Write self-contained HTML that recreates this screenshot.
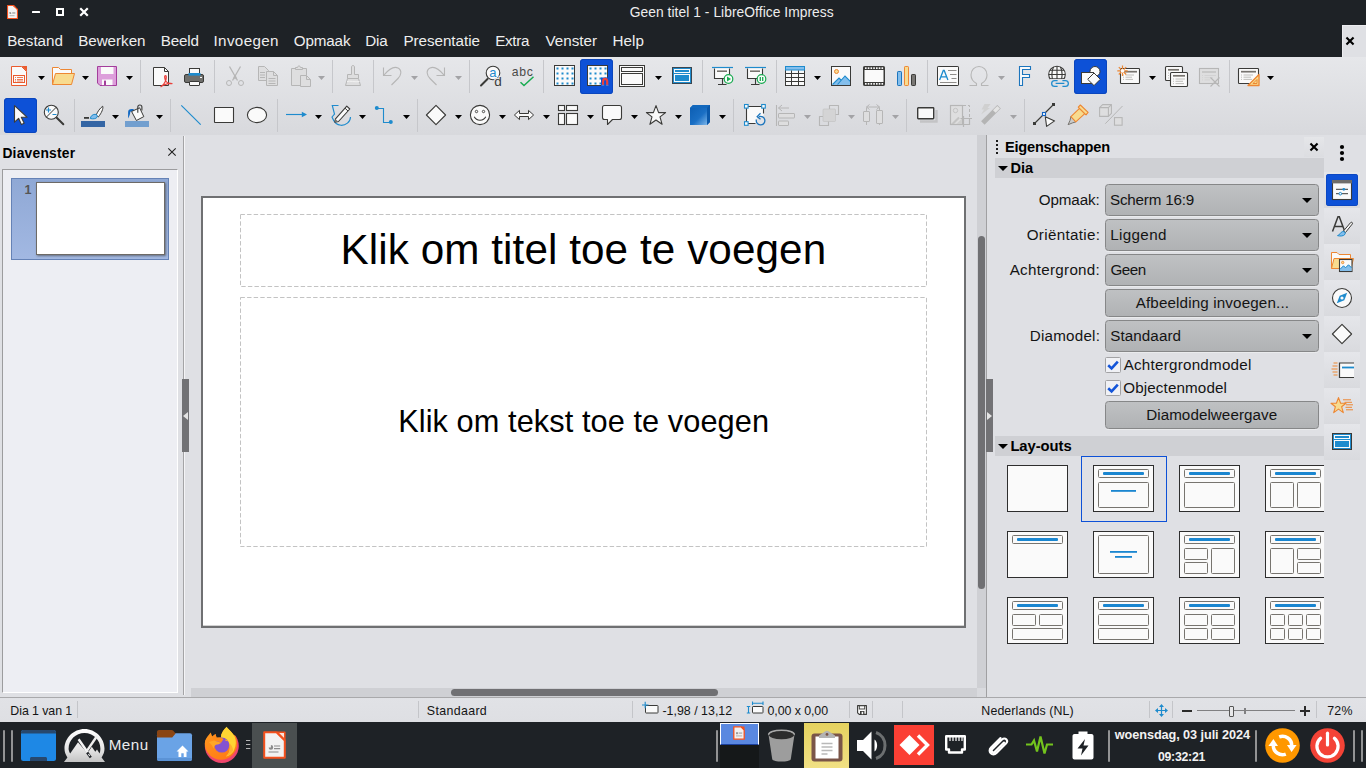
<!DOCTYPE html>
<html lang="nl"><head><meta charset="utf-8"><title>Geen titel 1 - LibreOffice Impress</title>
<style>
html,body{margin:0;padding:0;width:1366px;height:768px;overflow:hidden;background:#dfe0e4;}
body{position:relative;font-family:"Liberation Sans",sans-serif;color:#111;}
.a{position:absolute;}
.t{position:absolute;white-space:pre;line-height:1;}
svg{position:absolute;overflow:visible;}
.sep{position:absolute;width:1px;background:#c6c7cb;}
</style></head><body>
<!-- base -->
<div class="a" style="left:0px;top:0px;width:1366px;height:57px;background:#1e2226"></div>
<svg style="left:6.6px;top:5px;" width="11" height="14" viewBox="0 0 11 14"><path d="M0.55 0.55H6.6L10.45 4.4V13.45H0.55Z" fill="#f4f4f4" stroke="#f4511e" stroke-width="1.1" stroke-linejoin="round"/><path d="M6.6 0.7L10.3 4.4" stroke="#f4511e" stroke-width="1.3" stroke-dasharray="1.1 0.7"/><path d="M2.5 8.8V7C3.6 7 4.3 7.8 4.3 8.8Z" fill="#777"/><rect x="5.2" y="7.1" width="3.2" height="1.7" fill="#b4b4b4"/><rect x="2.5" y="10.2" width="5" height="1" fill="#b4b4b4"/></svg>
<div class="a" style="left:32px;top:11px;width:8px;height:2.2px;background:#fff;border-radius:0.5px"></div>
<div class="a" style="left:56px;top:8px;width:8px;height:8px;box-sizing:border-box;border:2px solid #fff"></div>
<svg style="left:80px;top:8px;" width="8" height="8" viewBox="0 0 8 8"><path d="M1 1L7 7M7 1L1 7" stroke="#fff" stroke-width="2.2" stroke-linecap="square"/></svg>
<span class="t" style="left:629.78px;top:6px;font-size:13.8px;color:#ededed;letter-spacing:0.053px;">Geen titel 1 - LibreOffice Impress</span>
<span class="t" style="left:7.18px;top:33px;font-size:15.2px;color:#eeeeee;letter-spacing:0.013px;">Bestand</span>
<span class="t" style="left:78.18px;top:33px;font-size:15.2px;color:#eeeeee;letter-spacing:-0.031px;">Bewerken</span>
<span class="t" style="left:160.68px;top:33px;font-size:15.2px;color:#eeeeee;letter-spacing:-0.142px;">Beeld</span>
<span class="t" style="left:213.55px;top:33px;font-size:15.2px;color:#eeeeee;letter-spacing:0.345px;">Invoegen</span>
<span class="t" style="left:293.75px;top:33px;font-size:15.2px;color:#eeeeee;letter-spacing:-0.124px;">Opmaak</span>
<span class="t" style="left:365.18px;top:33px;font-size:15.2px;color:#eeeeee;letter-spacing:-0.186px;">Dia</span>
<span class="t" style="left:403.43px;top:33px;font-size:15.2px;color:#eeeeee;letter-spacing:-0.029px;">Presentatie</span>
<span class="t" style="left:495.18px;top:33px;font-size:15.2px;color:#eeeeee;letter-spacing:-0.289px;">Extra</span>
<span class="t" style="left:545.4px;top:33px;font-size:15.2px;color:#eeeeee;letter-spacing:0.031px;">Venster</span>
<span class="t" style="left:612.43px;top:33px;font-size:15.2px;color:#eeeeee;letter-spacing:0.079px;">Help</span>
<div class="a" style="left:1342px;top:25px;width:24px;height:32px;background:#dfe0e4;box-shadow:inset 1px 1px 0 #ececef"></div>
<svg style="left:1346px;top:37px;" width="8" height="8" viewBox="0 0 8 8"><path d="M1.2 1.2L6.8 6.8M6.8 1.2L1.2 6.8" stroke="#000" stroke-width="2.1" stroke-linecap="square"/></svg>
<div class="a" style="left:0px;top:57px;width:1366px;height:78px;background:linear-gradient(#e6e7ea,#d8d9dd)"></div>
<span class="t" style="left:2.41px;top:147px;font-size:13.8px;color:#000;font-weight:bold;letter-spacing:0.235px;">Diavenster</span>
<svg style="left:168px;top:148px;" width="8" height="8" viewBox="0 0 8 8"><path d="M0.3 0.3L7.7 7.7M7.7 0.3L0.3 7.7" stroke="#222" stroke-width="1.1"/></svg>
<div class="a" style="left:2px;top:169px;width:176px;height:524px;box-sizing:border-box;background:#edeef3;border:1px solid #fff;border-top-color:#9c9c9e;border-left-color:#9c9c9e"></div>
<div class="a" style="left:11px;top:178px;width:158px;height:82px;box-sizing:border-box;background:linear-gradient(#8fa8d5,#a2b8e2);border:1px solid #6582b6"></div>
<div class="a" style="left:36px;top:182px;width:129px;height:73px;box-sizing:border-box;background:#fff;border:1px solid #6d6a66;box-shadow:1px 1px 2px rgba(60,60,60,.6)"></div>
<span class="t" style="left:24.45px;top:184px;font-size:12.6px;color:#555555;font-weight:bold;">1</span>
<div class="a" style="left:183px;top:136px;width:1px;height:559px;background:#a4a4a6"></div>
<div class="a" style="left:184px;top:136px;width:1px;height:559px;background:#f4f4f6"></div>
<div class="a" style="left:182px;top:379px;width:7px;height:73px;background:#727275"></div>
<svg style="left:183px;top:411.5px;" width="5" height="8" viewBox="0 0 5 8"><path d="M5 0V8L0 4Z" fill="#e4e4e4"/></svg>
<!-- toolbar -->
<div class="a" style="left:580px;top:59px;width:33px;height:35px;background:#0d51d7;border-radius:3.5px;box-shadow:inset 0 0 0 1px #0b46bd"></div>
<div class="a" style="left:1074px;top:59px;width:33px;height:35px;background:#0d51d7;border-radius:3.5px;box-shadow:inset 0 0 0 1px #0b46bd"></div>
<svg style="left:7px;top:64px;" width="24" height="24" viewBox="0 0 24 24"><path d="M4.5 2.5H14.5L19.5 7.5V21.5H4.5Z" fill="#fafafa" stroke="#ea5b2e" stroke-linejoin="round"/><path d="M14.5 2H20V7.5Z" fill="#ea5b2e"/><rect x="6.5" y="11.5" width="11" height="7" fill="#fafafa" stroke="#ea5b2e"/><path d="M8 13.5H9M10 13.5H16M8 15.5H9M10 15.5H16M8 17H9M10 17H16" stroke="#ea5b2e" stroke-width="0.8"/></svg>
<svg style="left:51px;top:64px;" width="24" height="24" viewBox="0 0 24 24"><path d="M1.5 20.5V3.5H7.5L9.5 5.5H20.5V9.5" fill="#fafafa" stroke="#ed8733" stroke-linejoin="round"/><path d="M1.5 20.5L4.5 9.5H23.5L20.5 20.5Z" fill="#f8db8f" stroke="#ed8733" stroke-linejoin="round"/></svg>
<svg style="left:95px;top:64px;" width="24" height="24" viewBox="0 0 24 24"><path d="M2.5 2.5H21.5V21.5H5L2.5 19Z" fill="#dd9edb" stroke="#a33e9b" stroke-linejoin="round"/><rect x="6" y="3" width="12.5" height="7" fill="#fafafa"/><rect x="7" y="15.5" width="10.5" height="5.6" fill="#fafafa"/><rect x="9" y="16.6" width="2" height="4.5" fill="#a33e9b"/></svg>
<svg style="left:149px;top:64px;" width="24" height="24" viewBox="0 0 24 24"><path d="M4.5 3.5H15.5L19.5 7.5V21.5H4.5Z" fill="#fafafa" stroke="#3a3a38" stroke-linejoin="round"/><path d="M15.5 3.5V7.5H19.5" fill="none" stroke="#3a3a38" stroke-linejoin="round"/><path d="M16.5 11.5C15.2 11.5 15.6 14.5 16.6 17C15.5 19.5 13.5 21.8 12 22.6C14.5 20.5 20 19 23 19.6C20.5 20 18 19 16.6 17C17.4 14.5 17.6 11.5 16.5 11.5Z" fill="none" stroke="#e9413c" stroke-width="1.25" stroke-linejoin="round"/></svg>
<svg style="left:182px;top:64px;" width="24" height="24" viewBox="0 0 24 24"><rect x="7.5" y="4.5" width="10" height="6" fill="#fafafa" stroke="#3a3a38"/><rect x="2.5" y="10.5" width="19" height="8" rx="1.5" fill="#6f6f6c" stroke="#3a3a38"/><rect x="6.5" y="9" width="12" height="2.6" fill="#1e8bcd"/><rect x="7.5" y="17.5" width="10" height="4" rx="0.5" fill="#fafafa" stroke="#3a3a38"/><rect x="18" y="13" width="2" height="1" fill="#fafafa"/></svg>
<svg style="left:223px;top:64px;" width="24" height="24" viewBox="0 0 24 24"><path d="M6.5 2.5L14.5 16.5M17.5 2.5L9.5 16.5" stroke="#b6b6b6" stroke-width="1.3" fill="none"/><path d="M10.3 13.2L12 11L13.7 13.2L12 15.5Z" fill="#b6b6b6"/><circle cx="6" cy="19" r="2.5" fill="none" stroke="#b6b6b6"/><circle cx="18" cy="19" r="2.5" fill="none" stroke="#b6b6b6"/></svg>
<svg style="left:256px;top:64px;" width="24" height="24" viewBox="0 0 24 24"><path d="M2.5 2.5H8.5L12.5 6.5V16.5H2.5Z" fill="#dededf" stroke="#b6b6b6"/><path d="M4 8.5H9M4 11H9M4 13.5H9" stroke="#b6b6b6"/><path d="M10.5 7.5H17.5L21.5 11.5V21.5H10.5Z" fill="#dededf" stroke="#b6b6b6"/><path d="M17.5 7.5V11.5H21.5" fill="none" stroke="#b6b6b6"/><path d="M12.5 14.5H19.5M12.5 17H19.5M12.5 19.5H19.5" stroke="#b6b6b6"/></svg>
<svg style="left:289px;top:64px;" width="24" height="24" viewBox="0 0 24 24"><path d="M2.5 4.5H17.5V21.5H2.5Z" fill="#dededf" stroke="#b6b6b6"/><path d="M6.5 5.5V3.5H8.5C8.5 1.5 11.5 1.5 11.5 3.5H13.5V5.5Z" fill="#dededf" stroke="#b6b6b6" stroke-linejoin="round"/><path d="M11.5 11.5H17.5L21.5 15.5V22.5H11.5Z" fill="#dededf" stroke="#b6b6b6"/><path d="M17.5 11.5V15.5H21.5" fill="none" stroke="#b6b6b6"/></svg>
<svg style="left:340.5px;top:64px;" width="24" height="24" viewBox="0 0 24 24"><path d="M10.5 3C10.5 1 13.5 1 13.5 3V10.5H17.5V14.5H6.5V10.5H10.5Z" fill="#dededf" stroke="#b6b6b6" stroke-linejoin="round"/><path d="M6.5 14.5L4.5 21.5H19.5L17.5 14.5Z" fill="#dededf" stroke="#b6b6b6" stroke-linejoin="round"/><path d="M6 17.5C9 16.5 14 18.5 18.5 17.5" fill="none" stroke="#f2f2f2" stroke-width="1"/></svg>
<svg style="left:380px;top:64px;" width="24" height="24" viewBox="0 0 24 24"><path d="M3.5 3.5V11.5H11.5" fill="none" stroke="#b6b6b6" stroke-width="1.1"/><path d="M3.7 11.3C9 5 14 2 18 4C22.5 6.5 21 11.5 18 14.5L11.5 21" fill="none" stroke="#b6b6b6" stroke-width="1.1"/></svg>
<svg style="left:424px;top:64px;" width="24" height="24" viewBox="0 0 24 24"><path d="M20.5 3.5V11.5H12.5" fill="none" stroke="#b6b6b6" stroke-width="1.1"/><path d="M20.3 11.3C15 5 10 2 6 4C1.5 6.5 3 11.5 6 14.5L12.5 21" fill="none" stroke="#b6b6b6" stroke-width="1.1"/></svg>
<svg style="left:479px;top:64px;" width="24" height="24" viewBox="0 0 24 24"><path d="M2 21.5L8.5 15" stroke="#3a3a38" stroke-width="2" stroke-linecap="round"/><circle cx="14" cy="9" r="6.8" fill="#fafafa" stroke="#3a3a38" stroke-width="1.1"/><text x="10.2" y="13" font-family="Liberation Sans,sans-serif" font-size="13" fill="#1e8bcd">a</text><text x="15.2" y="22" font-family="Liberation Sans,sans-serif" font-size="13.5" fill="#3a3a38" stroke="#e1e2e6" stroke-width="2.4" paint-order="stroke">d</text></svg>
<svg style="left:511px;top:64px;" width="24" height="24" viewBox="0 0 24 24"><text x="0.7" y="12" font-family="Liberation Sans,sans-serif" font-size="12.2" fill="#4a4a48" letter-spacing="0.75">abc</text><path d="M9.5 18.2L13 21.5L22.5 12.8" fill="none" stroke="#18ab50" stroke-width="1.5"/></svg>
<svg style="left:553px;top:64px;" width="24" height="24" viewBox="0 0 24 24"><rect x="1.5" y="1.5" width="20" height="20" fill="#fafafa" stroke="#3a3a38"/><rect x="3.5" y="3.5" width="2" height="2" fill="#1e8bcd"/><rect x="8.5" y="3.5" width="2" height="2" fill="#1e8bcd"/><rect x="13.5" y="3.5" width="2" height="2" fill="#1e8bcd"/><rect x="18.5" y="3.5" width="2" height="2" fill="#1e8bcd"/><rect x="3.5" y="8.5" width="2" height="2" fill="#1e8bcd"/><rect x="8.5" y="8.5" width="2" height="2" fill="#1e8bcd"/><rect x="13.5" y="8.5" width="2" height="2" fill="#1e8bcd"/><rect x="18.5" y="8.5" width="2" height="2" fill="#1e8bcd"/><rect x="3.5" y="13.5" width="2" height="2" fill="#1e8bcd"/><rect x="8.5" y="13.5" width="2" height="2" fill="#1e8bcd"/><rect x="13.5" y="13.5" width="2" height="2" fill="#1e8bcd"/><rect x="18.5" y="13.5" width="2" height="2" fill="#1e8bcd"/><rect x="3.5" y="18.5" width="2" height="2" fill="#1e8bcd"/><rect x="8.5" y="18.5" width="2" height="2" fill="#1e8bcd"/><rect x="13.5" y="18.5" width="2" height="2" fill="#1e8bcd"/><rect x="18.5" y="18.5" width="2" height="2" fill="#1e8bcd"/></svg>
<svg style="left:585px;top:64px;" width="24" height="24" viewBox="0 0 24 24"><rect x="2.5" y="1.5" width="20" height="20" fill="#fafafa" stroke="#3a3a38"/><rect x="4.5" y="3.5" width="2" height="2" fill="#1e8bcd"/><rect x="9.5" y="3.5" width="2" height="2" fill="#1e8bcd"/><rect x="14.5" y="3.5" width="2" height="2" fill="#1e8bcd"/><rect x="19.5" y="3.5" width="2" height="2" fill="#1e8bcd"/><rect x="4.5" y="8.5" width="2" height="2" fill="#1e8bcd"/><rect x="9.5" y="8.5" width="2" height="2" fill="#1e8bcd"/><rect x="14.5" y="8.5" width="2" height="2" fill="#1e8bcd"/><rect x="19.5" y="8.5" width="2" height="2" fill="#1e8bcd"/><rect x="4.5" y="13.5" width="2" height="2" fill="#1e8bcd"/><rect x="9.5" y="13.5" width="2" height="2" fill="#1e8bcd"/><rect x="14.5" y="13.5" width="2" height="2" fill="#1e8bcd"/><rect x="19.5" y="13.5" width="2" height="2" fill="#1e8bcd"/><rect x="4.5" y="18.5" width="2" height="2" fill="#1e8bcd"/><rect x="9.5" y="18.5" width="2" height="2" fill="#1e8bcd"/><rect x="14.5" y="18.5" width="2" height="2" fill="#1e8bcd"/><rect x="19.5" y="18.5" width="2" height="2" fill="#1e8bcd"/><rect x="16" y="13.5" width="8" height="9.5" fill="#0d51d7"/><path d="M18 22V17.5C18 13.9 22.2 13.9 22.2 17.5V22" fill="none" stroke="#e9413c" stroke-width="2.2"/><path d="M16.9 21.4H19.1M21.1 21.4H23.3" stroke="#3a7ddd" stroke-width="1.2"/></svg>
<svg style="left:620px;top:64px;" width="24" height="24" viewBox="0 0 24 24"><rect x="-0.5" y="1.5" width="25" height="21" fill="#fafafa" stroke="#3a3a38"/><rect x="1.5" y="3.5" width="21" height="4" fill="#fafafa" stroke="#3a3a38"/><rect x="1.5" y="9.5" width="21" height="11" fill="#fafafa" stroke="#3a3a38"/></svg>
<svg style="left:670px;top:64px;" width="24" height="24" viewBox="0 0 24 24"><rect x="2.5" y="3.5" width="19" height="16" fill="#1e8bcd" stroke="#3b4650" stroke-width="1"/><rect x="4.5" y="5.5" width="15" height="3" fill="#1e8bcd" stroke="#fafafa"/><rect x="4.5" y="10.5" width="15" height="7" fill="#1e8bcd" stroke="#fafafa"/></svg>
<svg style="left:711px;top:64px;" width="24" height="24" viewBox="0 0 24 24"><path d="M1 3.5H22" stroke="#1e8bcd" stroke-width="1.2"/><path d="M3.5 4.5V14.5H18.5V4.5" fill="#fafafa" stroke="#3a3a38" stroke-width="1.1"/><path d="M6 7.2H16" stroke="#77746f" stroke-width="1.6"/><path d="M11.5 14.5V20.5M7 20.5H15.5" stroke="#3a3a38" stroke-width="1.1" fill="none"/><circle cx="17.5" cy="15" r="4.3" fill="#fafafa" stroke="#18ab50" stroke-width="1.2"/><path d="M16 12.6V17.4L20 15Z" fill="#18ab50"/></svg>
<svg style="left:744px;top:64px;" width="24" height="24" viewBox="0 0 24 24"><path d="M1 3.5H22" stroke="#1e8bcd" stroke-width="1.2"/><path d="M3.5 4.5V14.5H18.5V4.5" fill="#fafafa" stroke="#3a3a38" stroke-width="1.1"/><path d="M6 7.2H16" stroke="#77746f" stroke-width="1.6"/><path d="M11.5 14.5V20.5M7 20.5H15.5" stroke="#3a3a38" stroke-width="1.1" fill="none"/><circle cx="17.5" cy="15" r="4.3" fill="#fafafa" stroke="#18ab50" stroke-width="1.2"/><path d="M16.3 13V17M18.7 13V17" stroke="#18ab50" stroke-width="1.3"/></svg>
<svg style="left:783px;top:64px;" width="24" height="24" viewBox="0 0 24 24"><rect x="2.5" y="2.5" width="19" height="19" fill="#fafafa" stroke="#3a3a38"/><rect x="2.5" y="2.5" width="19" height="3.5" fill="#83beec" stroke="#1e8bcd" stroke-width="1"/><path d="M2.5 9.5H21.5M2.5 13.5H21.5M2.5 17.5H21.5M8.5 6.5V21.5M15.5 6.5V21.5" stroke="#3a3a38" fill="none"/></svg>
<svg style="left:829px;top:64px;" width="24" height="24" viewBox="0 0 24 24"><rect x="2.5" y="2.5" width="19" height="19" fill="#fafafa" stroke="#3a3a38"/><circle cx="7.5" cy="7.5" r="2" fill="#f8db8f" stroke="#ed8733"/><path d="M3 21L10 14L12 16L16 12L21 17V21Z" fill="#83beec"/><path d="M3.5 20.5L10 14L12.5 16.5M8.5 20.5L16 12L21.3 17.3" fill="none" stroke="#1e8bcd" stroke-width="1.1"/><rect x="2.5" y="2.5" width="19" height="19" fill="none" stroke="#3a3a38"/></svg>
<svg style="left:862px;top:64px;" width="24" height="24" viewBox="0 0 24 24"><rect x="1.5" y="2.5" width="21" height="19" rx="0.8" fill="#3a3a38" stroke="#3a3a38"/><rect x="2.5" y="6" width="19" height="12" fill="#fafafa"/><rect x="3.00" y="3.3" width="1.6" height="1.7" fill="#fafafa"/><rect x="3.00" y="19" width="1.6" height="1.7" fill="#fafafa"/><rect x="5.75" y="3.3" width="1.6" height="1.7" fill="#fafafa"/><rect x="5.75" y="19" width="1.6" height="1.7" fill="#fafafa"/><rect x="8.50" y="3.3" width="1.6" height="1.7" fill="#fafafa"/><rect x="8.50" y="19" width="1.6" height="1.7" fill="#fafafa"/><rect x="11.25" y="3.3" width="1.6" height="1.7" fill="#fafafa"/><rect x="11.25" y="19" width="1.6" height="1.7" fill="#fafafa"/><rect x="14.00" y="3.3" width="1.6" height="1.7" fill="#fafafa"/><rect x="14.00" y="19" width="1.6" height="1.7" fill="#fafafa"/><rect x="16.75" y="3.3" width="1.6" height="1.7" fill="#fafafa"/><rect x="16.75" y="19" width="1.6" height="1.7" fill="#fafafa"/><rect x="19.50" y="3.3" width="1.6" height="1.7" fill="#fafafa"/><rect x="19.50" y="19" width="1.6" height="1.7" fill="#fafafa"/></svg>
<svg style="left:895px;top:64px;" width="24" height="24" viewBox="0 0 24 24"><rect x="2.5" y="7.5" width="4" height="14" rx="0.7" fill="#83beec" stroke="#1c75bd"/><rect x="9.5" y="2.5" width="4" height="19" rx="0.7" fill="#f8db8f" stroke="#ed8733"/><rect x="16.5" y="10.5" width="4" height="11" rx="0.7" fill="#797774" stroke="#3a3a38"/></svg>
<svg style="left:936px;top:64px;" width="24" height="24" viewBox="0 0 24 24"><rect x="1.5" y="2.5" width="21" height="19" rx="0.6" fill="#fafafa" stroke="#3a3a38"/><path d="M3.6 16L7.3 6.5H8.2L11.9 16M5 12.8H10.5" fill="none" stroke="#1e8bcd" stroke-width="1.3"/><path d="M12 6.5H20.5M14 10.5H20.5M15.5 14.5H20.5M4 18.5H20.5" stroke="#8f8d8a" stroke-width="1"/></svg>
<svg style="left:967px;top:64px;" width="24" height="24" viewBox="0 0 24 24"><path d="M2.5 21.5H9.5V19.5C6 17.5 4 14.5 4 11C4 6 7.5 2.5 12 2.5C16.5 2.5 20 6 20 11C20 14.5 18 17.5 14.5 19.5V21.5H21.5" fill="none" stroke="#b6b6b6" stroke-width="1.1"/></svg>
<svg style="left:1013px;top:64px;" width="24" height="24" viewBox="0 0 24 24"><path d="M6.5 2.5H17.5V5.5H9.5V10.5H16.5V13.5H9.5V21.5H6.5Z" fill="#fafafa" stroke="#1c75bd" stroke-width="1.1"/></svg>
<svg style="left:1046px;top:64px;" width="24" height="24" viewBox="0 0 24 24"><circle cx="11" cy="10.5" r="8.3" fill="#fafafa" stroke="#3a3a38" stroke-width="1.1"/><path d="M2.8 10.5H19.2M4 6.2H18M4 14.8H18M11 2.2V18.8M7.6 3C5.3 6.5 5.3 14.5 7.6 18M14.4 3C16.7 6.5 16.7 14.5 14.4 18" fill="none" stroke="#3a3a38" stroke-width="1.1"/><path d="M4 15H24V24H4Z" fill="#e0e1e5"/><path d="M11.6 16.5H8.6A2.95 2.95 0 0 0 8.6 22.4H11.6M16.4 16.5H19.4A2.95 2.95 0 0 1 19.4 22.4H16.4M9.6 19.45H18.4" fill="none" stroke="#1e8bcd" stroke-width="1.25"/></svg>
<svg style="left:1079px;top:64px;" width="24" height="24" viewBox="0 0 24 24"><circle cx="16" cy="7.5" r="5" fill="#fafafa" stroke="#3a3a38"/><rect x="2.5" y="8.5" width="12" height="11" fill="#fafafa" stroke="#3a3a38"/><path d="M15 9L21.3 15.3L15 21.6L8.7 15.3Z" fill="#fafafa" stroke="#3a3a38" stroke-linejoin="round"/></svg>
<svg style="left:1117px;top:64px;" width="24" height="24" viewBox="0 0 24 24"><rect x="3.5" y="4.5" width="19" height="15" rx="0.7" fill="#fafafa" stroke="#3a3a38" stroke-width="1.1"/><path d="M6 7.7H20" stroke="#77746f" stroke-width="1.7"/><path d="M6 11H7M8.5 11H17M6 13.2H7M8.5 13.2H15M6 15.4H7M8.5 15.4H16" stroke="#b0aeab" stroke-width="0.8"/><g stroke="#ed8733" stroke-width="1.2"><path d="M5.5 1.5V12M0.3 6.8H10.7M1.8 3.1L9.2 10.5M9.2 3.1L1.8 10.5"/></g><circle cx="5.5" cy="6.8" r="1.9" fill="#fafafa"/></svg>
<svg style="left:1164px;top:64px;" width="24" height="24" viewBox="0 0 24 24"><rect x="1.5" y="2.5" width="17" height="14" rx="1" fill="#fafafa" stroke="#3a3a38" stroke-width="1.1"/><path d="M4 5.8H15" stroke="#77746f" stroke-width="1.7"/><path d="M4 9H5M4 11.5H5M4 14H5" stroke="#b0aeab" stroke-width="0.8"/><rect x="6.5" y="8.5" width="17" height="14" rx="1" fill="#fafafa" stroke="#3a3a38" stroke-width="1.1"/><path d="M9 11.8H21" stroke="#77746f" stroke-width="1.7"/><path d="M9 15H10M11.5 15H21M9 17.3H10M11.5 17.3H19M9 19.6H10M11.5 19.6H20" stroke="#b0aeab" stroke-width="0.8"/></svg>
<svg style="left:1197px;top:64px;" width="24" height="24" viewBox="0 0 24 24"><rect x="2.5" y="4.5" width="19" height="15" fill="#dededf" stroke="#b6b6b6" stroke-width="1.1"/><path d="M5 8H19" stroke="#c4c4c4" stroke-width="1.7"/><path d="M5 11.5H6M7.5 11.5H19M5 13.7H6M7.5 13.7H16M5 15.9H6M7.5 15.9H13" stroke="#cfcfcf" stroke-width="0.8"/><path d="M13.5 13.5L22.5 22.5M22.5 13.5L13.5 22.5" stroke="#b6b6b6" stroke-width="1.1"/></svg>
<svg style="left:1237px;top:64px;" width="24" height="24" viewBox="0 0 24 24"><rect x="1.5" y="4.5" width="20" height="15" rx="0.7" fill="#fafafa" stroke="#3a3a38" stroke-width="1.1"/><path d="M4 7.7H19" stroke="#77746f" stroke-width="1.7"/><path d="M4 11H5M6.5 11H16M4 13.2H5M6.5 13.2H14M4 15.4H5M6.5 15.4H15" stroke="#b0aeab" stroke-width="0.8"/><path d="M22 10.5V21.5H11Z" fill="#f8db8f" stroke="#ed8733" stroke-width="1.3" stroke-linejoin="round"/><path d="M20 15.5V19.5H16Z" fill="#f8db8f" stroke="#ed8733" stroke-width="1"/></svg>
<svg style="left:38.0px;top:76px;" width="7" height="4" viewBox="0 0 7 4"><path d="M0 0H7L3.5 4Z" fill="#000"/></svg>
<svg style="left:82.0px;top:76px;" width="7" height="4" viewBox="0 0 7 4"><path d="M0 0H7L3.5 4Z" fill="#000"/></svg>
<svg style="left:126.0px;top:76px;" width="7" height="4" viewBox="0 0 7 4"><path d="M0 0H7L3.5 4Z" fill="#000"/></svg>
<svg style="left:655.0px;top:76px;" width="7" height="4" viewBox="0 0 7 4"><path d="M0 0H7L3.5 4Z" fill="#000"/></svg>
<svg style="left:814.0px;top:76px;" width="7" height="4" viewBox="0 0 7 4"><path d="M0 0H7L3.5 4Z" fill="#000"/></svg>
<svg style="left:1149.0px;top:76px;" width="7" height="4" viewBox="0 0 7 4"><path d="M0 0H7L3.5 4Z" fill="#000"/></svg>
<svg style="left:1267.0px;top:76px;" width="7" height="4" viewBox="0 0 7 4"><path d="M0 0H7L3.5 4Z" fill="#000"/></svg>
<svg style="left:318.0px;top:76px;" width="7" height="4" viewBox="0 0 7 4"><path d="M0 0H7L3.5 4Z" fill="#a3a3a6"/></svg>
<svg style="left:411.0px;top:76px;" width="7" height="4" viewBox="0 0 7 4"><path d="M0 0H7L3.5 4Z" fill="#a3a3a6"/></svg>
<svg style="left:455.0px;top:76px;" width="7" height="4" viewBox="0 0 7 4"><path d="M0 0H7L3.5 4Z" fill="#a3a3a6"/></svg>
<svg style="left:998.0px;top:76px;" width="7" height="4" viewBox="0 0 7 4"><path d="M0 0H7L3.5 4Z" fill="#a3a3a6"/></svg>
<div class="sep" style="left:140px;top:60px;height:33px;background:#c6c7cb"></div>
<div class="sep" style="left:214px;top:60px;height:33px;background:#c6c7cb"></div>
<div class="sep" style="left:332px;top:60px;height:33px;background:#c6c7cb"></div>
<div class="sep" style="left:373px;top:60px;height:33px;background:#c6c7cb"></div>
<div class="sep" style="left:469px;top:60px;height:33px;background:#c6c7cb"></div>
<div class="sep" style="left:543px;top:60px;height:33px;background:#c6c7cb"></div>
<div class="sep" style="left:702px;top:60px;height:33px;background:#c6c7cb"></div>
<div class="sep" style="left:776px;top:60px;height:33px;background:#c6c7cb"></div>
<div class="sep" style="left:927px;top:60px;height:33px;background:#c6c7cb"></div>
<div class="sep" style="left:1229px;top:60px;height:33px;background:#c6c7cb"></div>
<div class="a" style="left:4px;top:98px;width:33px;height:35px;background:#0d51d7;border-radius:3.5px;box-shadow:inset 0 0 0 1px #0b46bd"></div>
<svg style="left:8.5px;top:103px;" width="24" height="24" viewBox="0 0 24 24"><path d="M5.5 2.6V19.2L9.6 15.3L12.4 21.6L15.2 20.3L12.3 14.2H18Z" fill="#fafafa" stroke="#3a3a38" stroke-width="1.1" stroke-linejoin="round"/></svg>
<svg style="left:42px;top:103px;" width="24" height="24" viewBox="0 0 24 24"><path d="M14.5 14.5L21.3 21.3" stroke="#3a3a38" stroke-width="2" stroke-linecap="round"/><circle cx="9.3" cy="9.2" r="7" fill="#fafafa" stroke="#3a3a38" stroke-width="1.1"/><path d="M4.3 14.2L14.3 4.2" stroke="#3a3a38" stroke-width="1"/><path d="M4 7H9M6.5 4.5V9.5M10.5 11.5H14.5" stroke="#1e8bcd" stroke-width="1.2"/></svg>
<svg style="left:81px;top:103px;" width="24" height="24" viewBox="0 0 24 24"><rect x="0" y="18" width="24" height="6" fill="#3465a4"/><rect x="3" y="14" width="5" height="1.8" fill="#3a3a38"/><path d="M15.1 12.3C16.4 8.8 18.8 5.4 21.7 3.2C22.5 5.6 20.6 9.8 17.4 13.9Z" fill="#fafafa" stroke="#3a3a38" stroke-width="1" stroke-linejoin="round"/><path d="M9.3 15.5C9.6 13.4 11.2 11.4 14 11.3C16 11.3 16.8 13 16 14.3C15 15.8 12 16.2 9.3 15.5Z" fill="#83beec" stroke="#1e8bcd" stroke-linejoin="round"/></svg>
<svg style="left:125px;top:103px;" width="24" height="24" viewBox="0 0 24 24"><rect x="0" y="18" width="24" height="6" fill="#729fcf"/><path d="M8.8 6.2C5.2 5.4 3.1 6.4 3.1 9.2V15.6C4.5 13.2 5.2 11 5.3 8.8C6.4 8.1 7.6 8.1 8.8 8.4Z" fill="#1268c3"/><path d="M6.6 8.5L14.6 4.8L18.8 13.6L11.4 17.5Z" fill="#fafafa" stroke="#3a3a38" stroke-linejoin="round"/><path d="M12.8 9.8V4C12.8 1.4 16.9 1.4 16.9 4V7.4" fill="none" stroke="#3a3a38" stroke-width="1.1"/></svg>
<svg style="left:179px;top:103px;" width="24" height="24" viewBox="0 0 24 24"><path d="M2.3 2.3L21.7 21.7" stroke="#1e8bcd" stroke-width="1.15"/></svg>
<svg style="left:212px;top:103px;" width="24" height="24" viewBox="0 0 24 24"><rect x="2.5" y="4.5" width="19" height="15" rx="0.5" fill="#fafafa" stroke="#3a3a38" stroke-width="1.1"/></svg>
<svg style="left:245px;top:103px;" width="24" height="24" viewBox="0 0 24 24"><ellipse cx="12" cy="12" rx="9.6" ry="7.6" fill="#fafafa" stroke="#3a3a38" stroke-width="1.1"/></svg>
<svg style="left:285px;top:103px;" width="24" height="24" viewBox="0 0 24 24"><path d="M1 11.5H18" stroke="#1e8bcd" stroke-width="1.15"/><path d="M16.8 8.8L22 11.5L16.8 14.2Z" fill="#1e8bcd"/></svg>
<svg style="left:329px;top:103px;" width="24" height="24" viewBox="0 0 24 24"><path d="M9.5 2.5H3.3L5.5 11L3 14C4.5 18 7 22 12 22.3C16.5 22.5 21.5 19 21.5 14" fill="none" stroke="#1e8bcd" stroke-width="1.15"/><path d="M6.5 15.8L17.8 3.2L20.8 6L9.5 18.5L5.8 19.2Z" fill="#fafafa" stroke="#3a3a38" stroke-width="1.1" stroke-linejoin="round"/><path d="M16 5.2L19 8" stroke="#3a3a38" stroke-width="1"/><path d="M6.3 16L9.3 18.6L5.8 19.3Z" fill="#77746f"/></svg>
<svg style="left:373px;top:103px;" width="24" height="24" viewBox="0 0 24 24"><path d="M3.8 5.5H10.5V19.5H17.5" fill="none" stroke="#1e8bcd" stroke-width="1.1"/><circle cx="3.8" cy="5" r="2" fill="#1e8bcd"/><circle cx="17.8" cy="19" r="2" fill="#1e8bcd"/></svg>
<svg style="left:424px;top:103px;" width="24" height="24" viewBox="0 0 24 24"><path d="M12 2.4L21.6 12L12 21.6L2.4 12Z" fill="#fafafa" stroke="#3a3a38" stroke-width="1.1" stroke-linejoin="round"/></svg>
<svg style="left:468px;top:103px;" width="24" height="24" viewBox="0 0 24 24"><circle cx="12" cy="12" r="9.6" fill="#fafafa" stroke="#3a3a38" stroke-width="1.1"/><circle cx="8.5" cy="8.5" r="1.2" fill="#fafafa" stroke="#3a3a38" stroke-width="0.9"/><circle cx="15.5" cy="8.5" r="1.2" fill="#fafafa" stroke="#3a3a38" stroke-width="0.9"/><path d="M6.2 13.8C8.5 18.3 15.5 18.3 17.8 13.8" fill="none" stroke="#3a3a38" stroke-width="1.1"/></svg>
<svg style="left:512px;top:103px;" width="24" height="24" viewBox="0 0 24 24"><path d="M2.4 12L7.5 7.4V10.5H16.5V7.4L21.6 12L16.5 16.6V13.5H7.5V16.6Z" fill="#fafafa" stroke="#3a3a38" stroke-width="1" stroke-linejoin="round"/></svg>
<svg style="left:556px;top:103px;" width="24" height="24" viewBox="0 0 24 24"><rect x="2.5" y="2.5" width="6" height="5" fill="#fafafa" stroke="#3a3a38" stroke-width="1.1"/><rect x="10.5" y="2.5" width="11" height="5" fill="#fafafa" stroke="#3a3a38" stroke-width="1.1"/><rect x="2.5" y="10.5" width="6" height="11" fill="#fafafa" stroke="#3a3a38" stroke-width="1.1"/><rect x="10.5" y="10.5" width="11" height="11" fill="#fafafa" stroke="#3a3a38" stroke-width="1.1"/></svg>
<svg style="left:600px;top:103px;" width="24" height="24" viewBox="0 0 24 24"><path d="M4.5 2.5H19.5C20.6 2.5 21.5 3.4 21.5 4.5V14.5C21.5 15.6 20.6 16.5 19.5 16.5H12.5L7.5 21.5V16.5H4.5C3.4 16.5 2.5 15.6 2.5 14.5V4.5C2.5 3.4 3.4 2.5 4.5 2.5Z" fill="#fafafa" stroke="#3a3a38" stroke-width="1.1" stroke-linejoin="round"/></svg>
<svg style="left:644px;top:103px;" width="24" height="24" viewBox="0 0 24 24"><path d="M12 2.6L14.6 9.6H21.6L16 13.9L18.1 21.3L12 17L5.9 21.3L8 13.9L2.4 9.6H9.4Z" fill="#fafafa" stroke="#3a3a38" stroke-width="1.1" stroke-linejoin="round"/></svg>
<svg style="left:688px;top:103px;" width="24" height="24" viewBox="0 0 24 24"><defs><linearGradient id="cg" x1="0" y1="0" x2="1" y2="1"><stop offset="0" stop-color="#0d5fb4"/><stop offset="0.55" stop-color="#1a6fc4"/><stop offset="1" stop-color="#7db6ea"/></linearGradient></defs><path d="M5 2H22V19L19 22H2V5Z" fill="#0e60b5"/><rect x="2" y="5" width="17" height="17" fill="url(#cg)"/><path d="M2 5L5 2H22L19 5Z" fill="#1268bd"/><path d="M19 5L22 2V19L19 22Z" fill="#0a58aa"/></svg>
<svg style="left:743px;top:103px;" width="24" height="24" viewBox="0 0 24 24"><path d="M3.5 3.5H20.5V12M3.5 3.5V20.5H12" fill="#fafafa" stroke="none"/><rect x="3.5" y="3.5" width="17" height="17" fill="#fafafa"/><path d="M20.5 3.5V10.5M3.5 3.5H20.5M3.5 3.5V20.5H12.5" fill="none" stroke="#3a3a38" stroke-width="1.1"/><circle cx="17.5" cy="17.5" r="4.3" fill="#e1e2e6" stroke="none"/><path d="M16 13.6A4.3 4.3 0 1 1 13.4 16.5" fill="none" stroke="#1c75bd" stroke-width="1.3"/><path d="M17.5 10.3L14.2 13.6L17.5 16.2" fill="none" stroke="#1c75bd" stroke-width="1.3"/><rect x="1.5" y="1.5" width="3.6" height="3.6" fill="#fafafa" stroke="#1e8bcd" stroke-width="1.1"/><rect x="18.7" y="1.5" width="3.6" height="3.6" fill="#fafafa" stroke="#1e8bcd" stroke-width="1.1"/><rect x="1.5" y="18.7" width="3.6" height="3.6" fill="#fafafa" stroke="#1e8bcd" stroke-width="1.1"/></svg>
<svg style="left:775px;top:103px;" width="24" height="24" viewBox="0 0 24 24"><path d="M1.5 2V23" stroke="#b6b6b6" stroke-width="1.1"/><path d="M3.5 5H14M7 2L3.5 5L7 8" fill="none" stroke="#b6b6b6" stroke-width="1"/><rect x="3.5" y="10.5" width="16" height="4.5" rx="0.5" fill="#dededf" stroke="#b6b6b6"/><rect x="3.5" y="18" width="10" height="4.5" rx="0.5" fill="#dededf" stroke="#b6b6b6"/></svg>
<svg style="left:817px;top:103px;" width="24" height="24" viewBox="0 0 24 24"><path d="M12.5 6V2.5H21.5V11.5H18M11.5 18V22.5H2.5V13.5H6" fill="none" stroke="#b6b6b6" stroke-width="1.1" stroke-linejoin="round"/><rect x="6" y="6" width="12.5" height="12.5" rx="1" fill="#d4d4d5" stroke="#c0c0c0" stroke-width="0.6"/></svg>
<svg style="left:861px;top:103px;" width="24" height="24" viewBox="0 0 24 24"><path d="M5.5 4H18.5M8.5 1.5L5.5 4L8.5 6.5M15.5 1.5L18.5 4L15.5 6.5" fill="none" stroke="#b6b6b6" stroke-width="1"/><path d="M5.5 4.5V22M18.5 4.5V22" stroke="#b6b6b6" stroke-width="1"/><rect x="2.5" y="8.5" width="6" height="10" rx="0.5" fill="#dededf" stroke="#b6b6b6"/><rect x="15.5" y="7.5" width="6" height="13" rx="0.5" fill="#dededf" stroke="#b6b6b6"/></svg>
<svg style="left:915px;top:103px;" width="24" height="24" viewBox="0 0 24 24"><path d="M5 18.5H21.5V7" fill="none" stroke="#c3c3c5" stroke-width="2.4"/><rect x="2.7" y="4.7" width="16" height="11" rx="0.6" fill="#fafafa" stroke="#3a3a38" stroke-width="1.4"/></svg>
<svg style="left:948px;top:103px;" width="24" height="24" viewBox="0 0 24 24"><rect x="2.5" y="2.5" width="12" height="19" fill="#dededf" stroke="#b6b6b6" stroke-width="1.2"/><circle cx="7.5" cy="7.5" r="2.2" fill="none" stroke="#c4c4c4"/><path d="M3 21L10.3 13.7L11.8 15.2L6 21Z" fill="#c4c4c4"/><path d="M8.5 21L14 15.5V21Z" fill="#cfcfcf"/><path d="M15 2.5H21.5V15" fill="none" stroke="#b6b6b6" stroke-dasharray="3 2"/><path d="M12.5 15.5H24M15.5 13V24M15.5 21.5H21.5V15.5" fill="none" stroke="#b6b6b6" stroke-width="1.2"/></svg>
<svg style="left:979px;top:103px;" width="24" height="24" viewBox="0 0 24 24"><path d="M5.5 1H11.6L8.5 5H11L2 11.5L5 6.5H2.5Z" fill="#d0d0d0"/><path d="M2.1 18.2L18.3 2L21.8 5.5L5.6 21.7Z" fill="#b4b4b4"/><path d="M14 7.2L18.3 2.9L20.9 5.5L16.6 9.8Z" fill="#e4e4e4"/></svg>
<svg style="left:1033px;top:103px;" width="24" height="24" viewBox="0 0 24 24"><path d="M1.5 20.5L20.5 1.5" stroke="#3a3a38" stroke-width="1.1"/><rect x="0" y="19" width="3" height="3" fill="#3a3a38"/><rect x="19" y="0" width="3" height="3" fill="#3a3a38"/><path d="M12.3 13.7L21.6 17.9L13.6 23.4Z" fill="#fafafa" stroke="#3a3a38" stroke-width="1.1" stroke-linejoin="round"/><rect x="9.5" y="9.5" width="3" height="3" fill="#fafafa" stroke="#1262c2" stroke-width="1.1"/></svg>
<svg style="left:1066px;top:103px;" width="24" height="24" viewBox="0 0 24 24"><path d="M4.9 13.6L9.8 18.9L6.5 19.9L2.1 21.7L4 17.5Z" fill="#cbcbc9" stroke="#77746f" stroke-width="1" stroke-linejoin="round"/><path d="M4.9 13.6L13.5 5.3L18.8 10.6L9.8 18.9Z" fill="#f8db8f" stroke="#ed8733" stroke-width="1.1" stroke-linejoin="round"/><path d="M14.35 2L22.1 9.4L20 11.9L12.25 4.1Z" fill="#f8db8f" stroke="#ed8733" stroke-width="1.1" stroke-linejoin="round"/></svg>
<svg style="left:1099px;top:103px;" width="24" height="24" viewBox="0 0 24 24"><path d="M0.6 4.6L3.6 1.6H12.4V10.4L9.4 13.4H0.6Z" fill="#dededf" stroke="#b6b6b6" stroke-width="1.1" stroke-linejoin="round"/><path d="M0.6 4.6H9.4V13.4M9.4 4.6L12.4 1.6" fill="none" stroke="#b6b6b6" stroke-width="1.1"/><path d="M6.3 20.7L23.5 3" stroke="#b6b6b6" stroke-width="1"/><rect x="15.5" y="14.6" width="7.6" height="7.6" fill="#dededf" stroke="#b6b6b6" stroke-width="1.1"/></svg>
<svg style="left:112.0px;top:115px;" width="7" height="4" viewBox="0 0 7 4"><path d="M0 0H7L3.5 4Z" fill="#000"/></svg>
<svg style="left:156.0px;top:115px;" width="7" height="4" viewBox="0 0 7 4"><path d="M0 0H7L3.5 4Z" fill="#000"/></svg>
<svg style="left:315.0px;top:115px;" width="7" height="4" viewBox="0 0 7 4"><path d="M0 0H7L3.5 4Z" fill="#000"/></svg>
<svg style="left:359.0px;top:115px;" width="7" height="4" viewBox="0 0 7 4"><path d="M0 0H7L3.5 4Z" fill="#000"/></svg>
<svg style="left:403.0px;top:115px;" width="7" height="4" viewBox="0 0 7 4"><path d="M0 0H7L3.5 4Z" fill="#000"/></svg>
<svg style="left:455.0px;top:115px;" width="7" height="4" viewBox="0 0 7 4"><path d="M0 0H7L3.5 4Z" fill="#000"/></svg>
<svg style="left:499.0px;top:115px;" width="7" height="4" viewBox="0 0 7 4"><path d="M0 0H7L3.5 4Z" fill="#000"/></svg>
<svg style="left:543.0px;top:115px;" width="7" height="4" viewBox="0 0 7 4"><path d="M0 0H7L3.5 4Z" fill="#000"/></svg>
<svg style="left:587.0px;top:115px;" width="7" height="4" viewBox="0 0 7 4"><path d="M0 0H7L3.5 4Z" fill="#000"/></svg>
<svg style="left:631.0px;top:115px;" width="7" height="4" viewBox="0 0 7 4"><path d="M0 0H7L3.5 4Z" fill="#000"/></svg>
<svg style="left:675.0px;top:115px;" width="7" height="4" viewBox="0 0 7 4"><path d="M0 0H7L3.5 4Z" fill="#000"/></svg>
<svg style="left:719.0px;top:115px;" width="7" height="4" viewBox="0 0 7 4"><path d="M0 0H7L3.5 4Z" fill="#000"/></svg>
<svg style="left:804.0px;top:115px;" width="7" height="4" viewBox="0 0 7 4"><path d="M0 0H7L3.5 4Z" fill="#a3a3a6"/></svg>
<svg style="left:848.0px;top:115px;" width="7" height="4" viewBox="0 0 7 4"><path d="M0 0H7L3.5 4Z" fill="#a3a3a6"/></svg>
<svg style="left:892.0px;top:115px;" width="7" height="4" viewBox="0 0 7 4"><path d="M0 0H7L3.5 4Z" fill="#a3a3a6"/></svg>
<svg style="left:1010.0px;top:115px;" width="7" height="4" viewBox="0 0 7 4"><path d="M0 0H7L3.5 4Z" fill="#a3a3a6"/></svg>
<div class="sep" style="left:74px;top:99px;height:33px;background:#c6c7cb"></div>
<div class="sep" style="left:170px;top:99px;height:33px;background:#c6c7cb"></div>
<div class="sep" style="left:277px;top:99px;height:33px;background:#c6c7cb"></div>
<div class="sep" style="left:417px;top:99px;height:33px;background:#c6c7cb"></div>
<div class="sep" style="left:733px;top:99px;height:33px;background:#c6c7cb"></div>
<div class="sep" style="left:906px;top:99px;height:33px;background:#c6c7cb"></div>
<div class="sep" style="left:1024px;top:99px;height:33px;background:#c6c7cb"></div>
<!-- slide -->
<div class="a" style="left:201px;top:196px;width:765px;height:432px;box-sizing:border-box;background:#fff;border:2px solid #6f7072;box-shadow:inset 0 -1px 0 #d2d2d2"></div>
<svg style="left:240px;top:214px;" width="687" height="73" viewBox="0 0 687 73"><rect x="0.5" y="0.5" width="686" height="72" fill="none" stroke="#c3c3c3" stroke-width="1" stroke-dasharray="4.4 2.2"/></svg>
<svg style="left:240px;top:297px;" width="687" height="250" viewBox="0 0 687 250"><rect x="0.5" y="0.5" width="686" height="249" fill="none" stroke="#c3c3c3" stroke-width="1" stroke-dasharray="4.4 2.2"/></svg>
<span class="t" style="left:340.5px;top:229px;font-size:42.24px;color:#000;letter-spacing:0.077px;">Klik om titel toe te voegen</span>
<span class="t" style="left:398.21px;top:407px;font-size:30.72px;color:#000;letter-spacing:0.075px;">Klik om tekst toe te voegen</span>
<div class="a" style="left:977px;top:135px;width:9px;height:553px;background:#cfd0d4"></div>
<div class="a" style="left:978px;top:236px;width:7px;height:353px;background:#707073;border-radius:3.5px"></div>
<div class="a" style="left:191px;top:688px;width:786px;height:9px;background:#cfd0d4"></div>
<div class="a" style="left:451px;top:689px;width:267px;height:7px;background:#707073;border-radius:3.5px"></div>
<div class="a" style="left:977px;top:688px;width:9px;height:9px;background:#d9dade"></div>
<div class="a" style="left:986px;top:135px;width:1px;height:562px;background:#a0a0a2"></div>
<div class="a" style="left:986px;top:379px;width:7px;height:73px;background:#727275"></div>
<svg style="left:987px;top:411.5px;" width="5" height="8" viewBox="0 0 5 8"><path d="M0 0V8L5 4Z" fill="#e4e4e4"/></svg>
<!-- sidebar -->
<div class="a" style="left:996px;top:140px;width:2px;height:2px;background:#1c1c1c"></div>
<div class="a" style="left:996px;top:144px;width:2px;height:2px;background:#1c1c1c"></div>
<div class="a" style="left:996px;top:148px;width:2px;height:2px;background:#1c1c1c"></div>
<div class="a" style="left:996px;top:152px;width:2px;height:2px;background:#1c1c1c"></div>
<span class="t" style="left:1004.98px;top:140px;font-size:14.6px;color:#000;font-weight:bold;letter-spacing:-0.226px;">Eigenschappen</span>
<div class="a" style="left:1304px;top:137px;width:20px;height:20px;background:linear-gradient(#e5e6e9,#dcdde1)"></div>
<svg style="left:1310px;top:143px;" width="8" height="8" viewBox="0 0 8 8"><path d="M1.2 1.2L6.8 6.8M6.8 1.2L1.2 6.8" stroke="#000" stroke-width="2.1" stroke-linecap="square"/></svg>
<div class="a" style="left:995px;top:158px;width:329px;height:19.5px;background:#cfd0d4"></div>
<svg style="left:998px;top:166px;" width="10" height="5" viewBox="0 0 10 5"><path d="M0 0H10L5 5Z" fill="#000"/></svg>
<span class="t" style="left:1010.38px;top:161px;font-size:14.6px;color:#000;font-weight:bold;letter-spacing:-0.021px;">Dia</span>
<div class="a" style="left:995px;top:436px;width:329px;height:20px;background:#cfd0d4"></div>
<svg style="left:998px;top:444px;" width="10" height="5" viewBox="0 0 10 5"><path d="M0 0H10L5 5Z" fill="#000"/></svg>
<span class="t" style="left:1010.38px;top:439px;font-size:14.8px;color:#000;font-weight:bold;letter-spacing:-0.048px;">Lay-outs</span>
<span class="t" style="left:1038.75px;top:192px;font-size:15.2px;color:#141414;letter-spacing:-0.112px;">Opmaak:</span>
<span class="t" style="left:1026.75px;top:227px;font-size:15.2px;color:#141414;letter-spacing:0.311px;">Oriëntatie:</span>
<span class="t" style="left:1009.68px;top:262px;font-size:15.2px;color:#141414;letter-spacing:0.289px;">Achtergrond:</span>
<span class="t" style="left:1029.68px;top:328px;font-size:15.2px;color:#141414;letter-spacing:0.238px;">Diamodel:</span>
<span class="t" style="left:1123.68px;top:357px;font-size:15.2px;color:#141414;letter-spacing:0.238px;">Achtergrondmodel</span>
<span class="t" style="left:1123.25px;top:380px;font-size:15.2px;color:#141414;letter-spacing:0.125px;">Objectenmodel</span>
<div class="a" style="left:1105px;top:184px;width:214px;height:32px;box-sizing:border-box;background:linear-gradient(#bfc1c3,#b0b2b4);border:1px solid #868788;border-radius:3.5px;box-shadow:0 1px 0 rgba(255,255,255,.35)"></div>
<svg style="left:1302px;top:198.0px;" width="10" height="5" viewBox="0 0 10 5"><path d="M0 0H10L5 5Z" fill="#000"/></svg>
<span class="t" style="left:1109.96px;top:192px;font-size:15.2px;color:#141414;letter-spacing:-0.174px;">Scherm 16:9</span>
<div class="a" style="left:1105px;top:219px;width:214px;height:32px;box-sizing:border-box;background:linear-gradient(#bfc1c3,#b0b2b4);border:1px solid #868788;border-radius:3.5px;box-shadow:0 1px 0 rgba(255,255,255,.35)"></div>
<svg style="left:1302px;top:233.0px;" width="10" height="5" viewBox="0 0 10 5"><path d="M0 0H10L5 5Z" fill="#000"/></svg>
<span class="t" style="left:1110.18px;top:227px;font-size:15.2px;color:#141414;letter-spacing:0.364px;">Liggend</span>
<div class="a" style="left:1105px;top:254px;width:214px;height:32px;box-sizing:border-box;background:linear-gradient(#bfc1c3,#b0b2b4);border:1px solid #868788;border-radius:3.5px;box-shadow:0 1px 0 rgba(255,255,255,.35)"></div>
<svg style="left:1302px;top:268.0px;" width="10" height="5" viewBox="0 0 10 5"><path d="M0 0H10L5 5Z" fill="#000"/></svg>
<span class="t" style="left:1110.43px;top:262px;font-size:15.2px;color:#141414;letter-spacing:-0.499px;">Geen</span>
<div class="a" style="left:1105px;top:320px;width:214px;height:32px;box-sizing:border-box;background:linear-gradient(#bfc1c3,#b0b2b4);border:1px solid #868788;border-radius:3.5px;box-shadow:0 1px 0 rgba(255,255,255,.35)"></div>
<svg style="left:1302px;top:334.0px;" width="10" height="5" viewBox="0 0 10 5"><path d="M0 0H10L5 5Z" fill="#000"/></svg>
<span class="t" style="left:1110.21px;top:328px;font-size:15.2px;color:#141414;letter-spacing:0.09px;">Standaard</span>
<div class="a" style="left:1105px;top:289px;width:214px;height:28px;box-sizing:border-box;background:linear-gradient(#bfc1c3,#b0b2b4);border:1px solid #868788;border-radius:3.5px;box-shadow:0 1px 0 rgba(255,255,255,.35)"></div>
<span class="t" style="left:1135.68px;top:295px;font-size:15.2px;color:#141414;letter-spacing:0.142px;">Afbeelding invoegen...</span>
<div class="a" style="left:1105px;top:401px;width:214px;height:28px;box-sizing:border-box;background:linear-gradient(#bfc1c3,#b0b2b4);border:1px solid #868788;border-radius:3.5px;box-shadow:0 1px 0 rgba(255,255,255,.35)"></div>
<span class="t" style="left:1146.18px;top:407px;font-size:15.2px;color:#141414;letter-spacing:0.064px;">Diamodelweergave</span>
<div class="a" style="left:1105px;top:357px;width:16px;height:16px;box-sizing:border-box;background:#f0f1f5;border:1px solid #a2a2a4;border-radius:1.5px"></div><svg style="left:1105px;top:357px;" width="16" height="16" viewBox="0 0 16 16"><path d="M3.2 8.2L6.6 11.4L12.8 4.6" fill="none" stroke="#1455d9" stroke-width="2.6"/></svg>
<div class="a" style="left:1105px;top:380px;width:16px;height:16px;box-sizing:border-box;background:#f0f1f5;border:1px solid #a2a2a4;border-radius:1.5px"></div><svg style="left:1105px;top:380px;" width="16" height="16" viewBox="0 0 16 16"><path d="M3.2 8.2L6.6 11.4L12.8 4.6" fill="none" stroke="#1455d9" stroke-width="2.6"/></svg>
<div class="a" style="left:995px;top:456px;width:329px;height:232px;overflow:hidden"><svg style="left:12px;top:9px;" width="61" height="47" viewBox="0 0 61 47"><rect x="0.5" y="0.5" width="60" height="46" fill="#fafafa" stroke="#2e2e2e" stroke-width="1"/></svg><svg style="left:98px;top:9px;" width="61" height="47" viewBox="0 0 61 47"><rect x="0.5" y="0.5" width="60" height="46" fill="#fafafa" stroke="#2e2e2e" stroke-width="1"/><rect x="5.5" y="4.5" width="50" height="8" rx="1" fill="none" stroke="#77746f" stroke-width="1"/><rect x="10" y="7" width="41" height="3" rx="1" fill="#1a86d0"/><rect x="5.5" y="17.5" width="50" height="25" rx="1" fill="none" stroke="#77746f" stroke-width="1"/><rect x="18" y="25" width="25" height="1.8" fill="#1a86d0"/></svg><svg style="left:184px;top:9px;" width="61" height="47" viewBox="0 0 61 47"><rect x="0.5" y="0.5" width="60" height="46" fill="#fafafa" stroke="#2e2e2e" stroke-width="1"/><rect x="5.5" y="4.5" width="50" height="8" rx="1" fill="none" stroke="#77746f" stroke-width="1"/><rect x="10" y="7" width="41" height="3" rx="1" fill="#1a86d0"/><rect x="5.5" y="17.5" width="50" height="25" rx="1" fill="none" stroke="#77746f" stroke-width="1"/></svg><svg style="left:270px;top:9px;" width="61" height="47" viewBox="0 0 61 47"><rect x="0.5" y="0.5" width="60" height="46" fill="#fafafa" stroke="#2e2e2e" stroke-width="1"/><rect x="5.5" y="4.5" width="50" height="8" rx="1" fill="none" stroke="#77746f" stroke-width="1"/><rect x="10" y="7" width="41" height="3" rx="1" fill="#1a86d0"/><rect x="5.5" y="17.5" width="23" height="25" rx="1" fill="none" stroke="#77746f" stroke-width="1"/><rect x="32.5" y="17.5" width="23" height="25" rx="1" fill="none" stroke="#77746f" stroke-width="1"/></svg><svg style="left:12px;top:75px;" width="61" height="47" viewBox="0 0 61 47"><rect x="0.5" y="0.5" width="60" height="46" fill="#fafafa" stroke="#2e2e2e" stroke-width="1"/><rect x="5.5" y="4.5" width="50" height="8" rx="1" fill="none" stroke="#77746f" stroke-width="1"/><rect x="10" y="7" width="41" height="3" rx="1" fill="#1a86d0"/></svg><svg style="left:98px;top:75px;" width="61" height="47" viewBox="0 0 61 47"><rect x="0.5" y="0.5" width="60" height="46" fill="#fafafa" stroke="#2e2e2e" stroke-width="1"/><rect x="5.5" y="4.5" width="50" height="38" rx="1" fill="none" stroke="#77746f" stroke-width="1"/><rect x="17" y="20" width="27" height="1.8" fill="#1a86d0"/><rect x="22" y="25" width="17" height="1.8" fill="#1a86d0"/></svg><svg style="left:184px;top:75px;" width="61" height="47" viewBox="0 0 61 47"><rect x="0.5" y="0.5" width="60" height="46" fill="#fafafa" stroke="#2e2e2e" stroke-width="1"/><rect x="5.5" y="4.5" width="50" height="8" rx="1" fill="none" stroke="#77746f" stroke-width="1"/><rect x="10" y="7" width="41" height="3" rx="1" fill="#1a86d0"/><rect x="5.5" y="17.5" width="23" height="11" rx="1" fill="none" stroke="#77746f" stroke-width="1"/><rect x="5.5" y="31.5" width="23" height="11" rx="1" fill="none" stroke="#77746f" stroke-width="1"/><rect x="32.5" y="17.5" width="23" height="25" rx="1" fill="none" stroke="#77746f" stroke-width="1"/></svg><svg style="left:270px;top:75px;" width="61" height="47" viewBox="0 0 61 47"><rect x="0.5" y="0.5" width="60" height="46" fill="#fafafa" stroke="#2e2e2e" stroke-width="1"/><rect x="5.5" y="4.5" width="50" height="8" rx="1" fill="none" stroke="#77746f" stroke-width="1"/><rect x="10" y="7" width="41" height="3" rx="1" fill="#1a86d0"/><rect x="5.5" y="17.5" width="23" height="25" rx="1" fill="none" stroke="#77746f" stroke-width="1"/><rect x="32.5" y="17.5" width="23" height="11" rx="1" fill="none" stroke="#77746f" stroke-width="1"/><rect x="32.5" y="31.5" width="23" height="11" rx="1" fill="none" stroke="#77746f" stroke-width="1"/></svg><svg style="left:12px;top:141px;" width="61" height="47" viewBox="0 0 61 47"><rect x="0.5" y="0.5" width="60" height="46" fill="#fafafa" stroke="#2e2e2e" stroke-width="1"/><rect x="5.5" y="4.5" width="50" height="8" rx="1" fill="none" stroke="#77746f" stroke-width="1"/><rect x="10" y="7" width="41" height="3" rx="1" fill="#1a86d0"/><rect x="5.5" y="17.5" width="23" height="11" rx="1" fill="none" stroke="#77746f" stroke-width="1"/><rect x="32.5" y="17.5" width="23" height="11" rx="1" fill="none" stroke="#77746f" stroke-width="1"/><rect x="5.5" y="31.5" width="50" height="11" rx="1" fill="none" stroke="#77746f" stroke-width="1"/></svg><svg style="left:98px;top:141px;" width="61" height="47" viewBox="0 0 61 47"><rect x="0.5" y="0.5" width="60" height="46" fill="#fafafa" stroke="#2e2e2e" stroke-width="1"/><rect x="5.5" y="4.5" width="50" height="8" rx="1" fill="none" stroke="#77746f" stroke-width="1"/><rect x="10" y="7" width="41" height="3" rx="1" fill="#1a86d0"/><rect x="5.5" y="17.5" width="50" height="11" rx="1" fill="none" stroke="#77746f" stroke-width="1"/><rect x="5.5" y="31.5" width="50" height="11" rx="1" fill="none" stroke="#77746f" stroke-width="1"/></svg><svg style="left:184px;top:141px;" width="61" height="47" viewBox="0 0 61 47"><rect x="0.5" y="0.5" width="60" height="46" fill="#fafafa" stroke="#2e2e2e" stroke-width="1"/><rect x="5.5" y="4.5" width="50" height="8" rx="1" fill="none" stroke="#77746f" stroke-width="1"/><rect x="10" y="7" width="41" height="3" rx="1" fill="#1a86d0"/><rect x="5.5" y="17.5" width="23" height="11" rx="1" fill="none" stroke="#77746f" stroke-width="1"/><rect x="32.5" y="17.5" width="23" height="11" rx="1" fill="none" stroke="#77746f" stroke-width="1"/><rect x="5.5" y="31.5" width="23" height="11" rx="1" fill="none" stroke="#77746f" stroke-width="1"/><rect x="32.5" y="31.5" width="23" height="11" rx="1" fill="none" stroke="#77746f" stroke-width="1"/></svg><svg style="left:270px;top:141px;" width="61" height="47" viewBox="0 0 61 47"><rect x="0.5" y="0.5" width="60" height="46" fill="#fafafa" stroke="#2e2e2e" stroke-width="1"/><rect x="5.5" y="4.5" width="50" height="8" rx="1" fill="none" stroke="#77746f" stroke-width="1"/><rect x="10" y="7" width="41" height="3" rx="1" fill="#1a86d0"/><rect x="5.5" y="17.5" width="14" height="11" rx="1" fill="none" stroke="#77746f" stroke-width="1"/><rect x="5.5" y="31.5" width="14" height="11" rx="1" fill="none" stroke="#77746f" stroke-width="1"/><rect x="23.5" y="17.5" width="14" height="11" rx="1" fill="none" stroke="#77746f" stroke-width="1"/><rect x="23.5" y="31.5" width="14" height="11" rx="1" fill="none" stroke="#77746f" stroke-width="1"/><rect x="41.5" y="17.5" width="14" height="11" rx="1" fill="none" stroke="#77746f" stroke-width="1"/><rect x="41.5" y="31.5" width="14" height="11" rx="1" fill="none" stroke="#77746f" stroke-width="1"/></svg><div class="a" style="left:86px;top:0px;width:86px;height:66px;box-sizing:border-box;border:1px solid #0d51d7"></div></div>
<svg style="left:1339px;top:143px;" width="6" height="19" viewBox="0 0 6 19"><circle cx="3" cy="4" r="2.1" fill="#000"/><circle cx="3" cy="10" r="2.1" fill="#000"/><circle cx="3" cy="16" r="2.1" fill="#000"/></svg>
<div class="a" style="left:1324px;top:172px;width:36px;height:36px;background:linear-gradient(#e5e6ea,#d9dade)"></div>
<div class="a" style="left:1324px;top:208px;width:36px;height:36px;background:linear-gradient(#e5e6ea,#d9dade)"></div>
<div class="a" style="left:1324px;top:244px;width:36px;height:36px;background:linear-gradient(#e5e6ea,#d9dade)"></div>
<div class="a" style="left:1324px;top:280px;width:36px;height:36px;background:linear-gradient(#e5e6ea,#d9dade)"></div>
<div class="a" style="left:1324px;top:316px;width:36px;height:36px;background:linear-gradient(#e5e6ea,#d9dade)"></div>
<div class="a" style="left:1324px;top:352px;width:36px;height:36px;background:linear-gradient(#e5e6ea,#d9dade)"></div>
<div class="a" style="left:1324px;top:388px;width:36px;height:36px;background:linear-gradient(#e5e6ea,#d9dade)"></div>
<div class="a" style="left:1324px;top:424px;width:36px;height:36px;background:linear-gradient(#e5e6ea,#d9dade)"></div>
<div class="a" style="left:1326px;top:174px;width:32px;height:32px;background:#0d51d7;border-radius:3px;box-shadow:0 0 0 0.5px #0a3fb0 inset"></div>
<svg style="left:1330px;top:178px;" width="24" height="24" viewBox="0 0 24 24"><rect x="2.5" y="2.5" width="19" height="19" fill="#fafafa" stroke="#3a3a38" stroke-width="1.1"/><rect x="2" y="2" width="20" height="3.4" fill="#6f6d69"/><path d="M6 11.3H18M6 15.7H18" stroke="#3a3a38" stroke-width="1"/><circle cx="13.8" cy="11.3" r="1.4" fill="#1e8bcd"/><circle cx="10.3" cy="15.7" r="1.3" fill="#fafafa" stroke="#1e8bcd" stroke-width="1"/></svg>
<svg style="left:1330px;top:214px;" width="24" height="24" viewBox="0 0 24 24"><path d="M2.5 17.5L8 2.8H9.3L14.8 17.5M4.6 12.5H12.6" fill="none" stroke="#3a3a38" stroke-width="1.5"/><path d="M13.5 17L20.5 8.7C21.6 7.5 23.2 8.8 22.2 10.1L15.4 18.6Z" fill="#fafafa" stroke="#3a3a38" stroke-width="1" stroke-linejoin="round"/><path d="M7.5 21.6C9.5 21.6 10 18.2 12.8 17.5C14.5 17.3 15.8 18.8 15 20.2C13.8 22.2 10 22.4 7.5 21.6Z" fill="#83beec" stroke="#1e8bcd" stroke-linejoin="round"/></svg>
<svg style="left:1330px;top:250px;" width="24" height="24" viewBox="0 0 24 24"><path d="M1.5 18.5V2.5H7L9 4.5H20.5V8.5" fill="#fafafa" stroke="#ed8733" stroke-linejoin="round"/><path d="M1.5 18.5L4 8.5H23.5L21 18.5Z" fill="#f8db8f" stroke="#ed8733" stroke-linejoin="round"/><rect x="9.5" y="9.5" width="12.5" height="12" fill="#fafafa" stroke="#3a3a38" stroke-width="1.1"/><circle cx="12.7" cy="12.5" r="1.2" fill="#f8db8f" stroke="#ed8733" stroke-width="0.9"/><path d="M10 21V19L13.5 15.5L15.5 17.5L18.5 14.5L21.5 17.5V21Z" fill="#83beec"/><path d="M10 19.3L13.5 15.8L15.5 17.8L18.5 14.8L21.5 17.8" fill="none" stroke="#1e8bcd" stroke-width="1"/></svg>
<svg style="left:1330px;top:286px;" width="24" height="24" viewBox="0 0 24 24"><circle cx="12" cy="12" r="9.5" fill="#fafafa" stroke="#3a3a38" stroke-width="1.1"/><path d="M17.2 6.8L14.3 14.3L6.8 17.2L9.7 9.7Z" fill="#1e8bcd"/><circle cx="12" cy="12" r="1.6" fill="#fafafa"/></svg>
<svg style="left:1330px;top:322px;" width="24" height="24" viewBox="0 0 24 24"><path d="M12 2.4L21.6 12L12 21.6L2.4 12Z" fill="#fafafa" stroke="#3a3a38" stroke-width="1.1" stroke-linejoin="round"/></svg>
<svg style="left:1330px;top:358px;" width="24" height="24" viewBox="0 0 24 24"><path d="M3.5 5H7.5M2.5 8H7.5M1.5 11H7.5M2.5 14H7.5M3.5 17H7.5" stroke="#ed8733" stroke-width="1.1"/><path d="M24 5H9.5V19.5H24" fill="#fafafa" stroke="#3a3a38" stroke-width="1.2"/><path d="M12 9.5H24" stroke="#1e8bcd" stroke-width="1.8"/></svg>
<svg style="left:1330px;top:394px;" width="24" height="24" viewBox="0 0 24 24"><path d="M13 5.8H21M14.5 8.3H22M16 10.8H23M15.5 13.3H22M16 15.8H23" stroke="#ed8733" stroke-width="1"/><path d="M8.5 3.6L10.6 9.3H16L11.6 12.7L13.3 18.6L8.5 15.1L3.7 18.6L5.4 12.7L1 9.3H6.4Z" fill="#f8db8f" stroke="#ed8733" stroke-width="1.1" stroke-linejoin="round"/></svg>
<svg style="left:1330px;top:430px;" width="24" height="24" viewBox="0 0 24 24"><rect x="2.5" y="3.5" width="19" height="16" fill="#1e8bcd" stroke="#3a3a38" stroke-width="1"/><rect x="4.5" y="5.5" width="15" height="3" fill="#1e8bcd" stroke="#fafafa"/><rect x="4.5" y="10.5" width="15" height="7" fill="#1e8bcd" stroke="#fafafa"/></svg>
<!-- status -->
<div class="a" style="left:0px;top:697px;width:1366px;height:25px;background:linear-gradient(#e1e2e6,#dedfe3)"></div>
<div class="a" style="left:0px;top:697px;width:1366px;height:1px;background:#a9a9ab"></div>
<div class="sep" style="left:77px;top:701px;height:17px;background:#c4c5c9"></div>
<div class="sep" style="left:418px;top:701px;height:17px;background:#c4c5c9"></div>
<div class="sep" style="left:632px;top:701px;height:17px;background:#c4c5c9"></div>
<div class="sep" style="left:849px;top:701px;height:17px;background:#c4c5c9"></div>
<div class="sep" style="left:872px;top:701px;height:17px;background:#c4c5c9"></div>
<div class="sep" style="left:902px;top:701px;height:17px;background:#c4c5c9"></div>
<div class="sep" style="left:1149px;top:701px;height:17px;background:#c4c5c9"></div>
<div class="sep" style="left:1172px;top:701px;height:17px;background:#c4c5c9"></div>
<div class="sep" style="left:1316px;top:701px;height:17px;background:#c4c5c9"></div>
<span class="t" style="left:10.35px;top:705px;font-size:12.4px;color:#141414;letter-spacing:-0.079px;">Dia 1 van 1</span>
<span class="t" style="left:426.84px;top:705px;font-size:12.4px;color:#141414;letter-spacing:0.344px;">Standaard</span>
<span class="t" style="left:662.39px;top:705px;font-size:12.4px;color:#141414;letter-spacing:0.015px;">-1,98 / 13,12</span>
<span class="t" style="left:767.47px;top:705px;font-size:12.4px;color:#141414;letter-spacing:-0.075px;">0,00 x 0,00</span>
<span class="t" style="left:981.35px;top:705px;font-size:12.4px;color:#141414;letter-spacing:0.097px;">Nederlands (NL)</span>
<span class="t" style="left:1327.34px;top:705px;font-size:12.4px;color:#141414;letter-spacing:0.153px;">72%</span>
<svg style="left:641px;top:701px;" width="18" height="13" viewBox="0 0 18 13"><rect x="4.5" y="4.5" width="12.5" height="7.5" rx="0.6" fill="#fafafa" stroke="#3a3a38" stroke-width="1"/><path d="M1 4H7.5M4.2 0.8V7.2" stroke="#1e8bcd" stroke-width="1.1"/></svg>
<svg style="left:746px;top:701px;" width="18" height="13" viewBox="0 0 18 13"><rect x="6.5" y="5.5" width="10.5" height="6.5" rx="0.6" fill="#fafafa" stroke="#3a3a38" stroke-width="1"/><path d="M6.5 2.3H17M6.5 0.5V4M17 0.5V4" stroke="#1e8bcd" stroke-width="1.1" fill="none"/><path d="M2.5 5.5V12M0.8 5.5H4.2M0.8 12H4.2" stroke="#1e8bcd" stroke-width="1.1" fill="none"/></svg>
<svg style="left:857px;top:705px;" width="10" height="10" viewBox="0 0 10 10"><path d="M0.6 0.6H9.4V9.4H2.2L0.6 7.8Z" fill="#fafafa" stroke="#3a3a38" stroke-width="1.1" stroke-linejoin="round"/><rect x="2.3" y="0.8" width="5.4" height="3.2" fill="#fafafa" stroke="#3a3a38" stroke-width="0.9"/><rect x="3" y="6" width="4.4" height="3.2" fill="#3a3a38"/><rect x="4.6" y="6.8" width="1.6" height="2.4" fill="#fafafa"/></svg>
<svg style="left:1155px;top:704px;" width="13" height="13" viewBox="0 0 13 13"><path d="M6.5 1.5V11.5M1.5 6.5H11.5" stroke="#1e8bcd" stroke-width="1.2"/><path d="M6.5 0L9 3H4ZM6.5 13L9 10H4ZM0 6.5L3 4V9ZM13 6.5L10 4V9Z" fill="#1e8bcd"/></svg>
<div class="a" style="left:1182px;top:710px;width:10px;height:2px;background:#2a2a2a"></div>
<div class="a" style="left:1197px;top:710px;width:98px;height:1.4px;background:#808082"></div>
<div class="a" style="left:1244px;top:708px;width:1.6px;height:5.5px;background:#808082"></div>
<div class="a" style="left:1229px;top:706px;width:5px;height:10.5px;box-sizing:border-box;background:#e8e8ea;border:1px solid #555;border-radius:1px"></div>
<div class="a" style="left:1300px;top:710px;width:10px;height:2px;background:#2a2a2a"></div>
<div class="a" style="left:1304px;top:706px;width:2px;height:10px;background:#2a2a2a"></div>
<!-- taskbar -->
<div class="a" style="left:0px;top:722px;width:1366px;height:46px;background:#1e2226"></div>
<div class="a" style="left:3px;top:730px;width:2px;height:32px;background:#929394;border-radius:1px"></div>
<div class="a" style="left:11px;top:730px;width:2px;height:32px;background:#929394;border-radius:1px"></div>
<div class="a" style="left:715.5px;top:730px;width:2px;height:32px;background:#929394;border-radius:1px"></div>
<div class="a" style="left:1108px;top:730px;width:2px;height:32px;background:#929394;border-radius:1px"></div>
<div class="a" style="left:1255px;top:730px;width:2px;height:32px;background:#929394;border-radius:1px"></div>
<div class="a" style="left:1353px;top:730px;width:2px;height:32px;background:#929394;border-radius:1px"></div>
<div class="a" style="left:1361px;top:730px;width:2px;height:32px;background:#929394;border-radius:1px"></div>
<div class="a" style="left:252px;top:723px;width:45px;height:45px;background:#4a4f50"></div>
<div class="a" style="left:720px;top:723px;width:39px;height:45px;background:#151819"></div>
<div class="a" style="left:720px;top:723px;width:39px;height:22px;box-sizing:border-box;background:#5a88e0;border:1px solid #fff;border-bottom:1.5px solid #1a3f9c"></div>
<div class="a" style="left:804px;top:723px;width:45px;height:45px;background:linear-gradient(#e5d25f,#f1e084)"></div>
<div class="a" style="left:894px;top:725px;width:40px;height:40px;background:#fb3f34"></div>
<svg style="left:21px;top:730px;" width="35" height="31" viewBox="0 0 35 31"><rect x="0" y="0" width="35" height="31" rx="2.5" fill="#1e88e5"/><path d="M0 3.5V2.5C0 1.1 1.1 0 2.5 0H32.5C33.9 0 35 1.1 35 2.5V3.5Z" fill="#27486e"/><path d="M9 31V28.5C9 27.7 9.7 27 10.5 27H24.5C25.3 27 26 27.7 26 28.5V31Z" fill="#27486e"/></svg>
<svg style="left:64px;top:729px;" width="41" height="33" viewBox="0 0 41 33"><defs><linearGradient id="mxg" x1="0" y1="0" x2="0" y2="1"><stop offset="0" stop-color="#ffffff"/><stop offset="0.6" stop-color="#e6e6e6"/><stop offset="1" stop-color="#c4c4c4"/></linearGradient></defs><path d="M0 33L3.4 28.4C1.6 25.6 0.5 22.8 0.5 19.8C0.5 8.9 9.5 0 20.5 0C31.5 0 40.5 8.9 40.5 19.8C40.5 22.8 39.4 25.6 37.6 28.4L41 33Z" fill="url(#mxg)"/><path d="M6.2 24.6C5 22.6 4.6 21 4.6 19.8C4.6 11.1 11.7 4.1 20.5 4.1C29.3 4.1 36.4 11.1 36.4 19.8C36.4 21.4 36.1 23 35.6 24.5L33 20.5L31.3 22.8L27.8 17.8L23.4 24.2L14 13.2Z" fill="#1e2226"/><path d="M14.6 10.2L27 28.2" stroke="#f6f6f6" stroke-width="2.4"/><path d="M33.2 6.8L22.4 22.6" stroke="#f0f0f0" stroke-width="2.4"/><path d="M23.2 23.6L26.8 28.6" stroke="#1e2226" stroke-width="2.6"/><path d="M24.4 25L25.8 27" stroke="#e8e8e8" stroke-width="1.2"/></svg>
<svg style="left:157px;top:730px;" width="35" height="31" viewBox="0 0 35 31"><rect x="0" y="3.3" width="35" height="27.7" rx="2" fill="#6aa3e6"/><path d="M0 29V28H35V29C35 30.1 34.1 31 33 31H2C0.9 31 0 30.1 0 29Z" fill="#5b93d6"/><path d="M0 7.4V2C0 0.9 0.9 0 2 0H14.6C15.3 0 15.9 0.3 16.3 0.8L18.6 3.6L15.2 7.4Z" fill="#8a4513"/><path d="M25.5 15.5L19.5 21.5H21.5V27H24.3V23.2H26.7V27H29.5V21.5H31.5Z" fill="#ffffff"/></svg>
<svg style="left:204px;top:727px;" width="36" height="37" viewBox="0 0 36 37"><defs><linearGradient id="ffo" x1="0.2" y1="0" x2="0.7" y2="1"><stop offset="0" stop-color="#ff9a1f"/><stop offset="1" stop-color="#ff7a16"/></linearGradient></defs><circle cx="17.8" cy="19" r="17" fill="#f0466c"/><circle cx="17" cy="16.6" r="16.2" fill="url(#ffo)"/><path d="M-1 -1H22.5V-0.2L19.3 3.6L17.2 7.6L16.9 10.4L12.6 10.8L11.5 7L8.2 9.4L6.7 5.5L3.5 9.5L1.2 13L-1 16Z" fill="#1e2226"/><path d="M22.5 -1V-0.2L27 4.6L30.2 8.6L31.4 7.2L34 11L37 12V-1Z" fill="#1e2226"/><path d="M22.5 -0.2C25.5 3 29 6.5 30.9 10C32.5 14 32 19 30.3 22.5C29.5 26 25 29 22 29.5C26 26 27 20 24.5 15.5C23 13 20 11 16.9 10.4C17 6.5 19.5 3 22.5 -0.2Z" fill="#ffd633"/><path d="M24.5 15.5C27 20 26 26 22 29.5C24.5 28.8 27.6 26.5 29.2 23.6C28.8 20 27 17 24.5 15.5Z" fill="#ffb22e"/><circle cx="17.8" cy="18.1" r="7.5" fill="#8453d1"/><path d="M11.5 7L12.6 10.8C14.5 10.2 17.5 10.6 19.5 12L17.3 15.6L10 13.6L8.2 9.4Z" fill="#ff8a1a"/><path d="M4.8 15.1L10 13.5L17.4 15.7L14.8 17.3L11.9 17.8L10.3 19.2L9.6 21.5C8.6 19.5 7.5 17.5 4.8 15.1Z" fill="#ffa726"/><path d="M21 12.4C22.6 12.6 24 13.4 24.8 14.4C23.6 13.9 22.3 13.6 21.5 13.7Z" fill="#ffa726"/></svg>
<svg style="left:246px;top:740px;" width="5" height="9" viewBox="0 0 5 9"><path d="M0 0.5H4.3M0 4.5H4.3M0 8.5H4.3" stroke="#b4b4b4" stroke-width="1"/></svg>
<svg style="left:263px;top:731px;" width="23" height="28" viewBox="0 0 23 28"><path d="M1.2 1.2H13.5L21.8 9.5V26.8H1.2Z" fill="#f2f2f2" stroke="#f4511e" stroke-width="2" stroke-linejoin="round"/><path d="M14.3 1.2H21.8V8.7Z" fill="#fbe3da" stroke="#f4511e" stroke-width="1.6" stroke-linejoin="round"/><path d="M5.6 16.4A2.3 2.3 0 1 0 7.9 14.1V16.4Z" fill="#8a8a8a"/><path d="M11 15H17.2M11 17.6H17.2M5.5 21H15.5" stroke="#8a8a8a" stroke-width="1.1"/></svg>
<svg style="left:733px;top:726px;" width="12" height="14" viewBox="0 0 12 14"><path d="M0.8 0.8H8L11.2 4V13.2H0.8Z" fill="#f1f1f1" stroke="#f4511e" stroke-width="1.3" stroke-linejoin="round"/><path d="M7.8 0.5L11.5 4.2V0.5Z" fill="#f4511e"/><rect x="3" y="6.2" width="2.2" height="2" fill="#9a9a9a"/><rect x="6" y="6.4" width="3.2" height="1.4" fill="#b0b0b0"/><rect x="3" y="9.4" width="6.2" height="1" fill="#b0b0b0"/></svg>
<svg style="left:767px;top:729px;" width="29" height="33" viewBox="0 0 29 33"><path d="M1.5 5.5C1.5 3 7 1 14.5 1C22 1 27.5 3 27.5 5.5L23.8 30C23.5 31.8 19 32.6 14.5 32.6C10 32.6 5.5 31.8 5.2 30Z" fill="#9d9d9d"/><ellipse cx="14.5" cy="5.8" rx="12.6" ry="4.4" fill="#2c2c2c"/><path d="M1.6 5.8C1.6 3.2 7 1.2 14.5 1.2C22 1.2 27.4 3.2 27.4 5.8" fill="none" stroke="#a8a8a8" stroke-width="1.4"/></svg>
<svg style="left:811px;top:730px;" width="32" height="32" viewBox="0 0 32 32"><rect x="0.5" y="3.5" width="31" height="28" rx="3" fill="#7a5548"/><rect x="4.5" y="6.5" width="23" height="22" fill="#ffffff"/><path d="M8 8V5.5L14 1.5C15.3 0.6 16.7 0.6 18 1.5L24 5.5V8Z" fill="#b3b3b3"/><circle cx="16" cy="4.4" r="1.4" fill="#7a5548"/><path d="M10.5 13.5H21.5M10.5 17H21.5M10.5 20.5H21.5M10.5 24H16.5" stroke="#b9b9b9" stroke-width="1.5"/></svg>
<svg style="left:857px;top:731px;" width="31" height="29" viewBox="0 0 31 29"><path d="M0 9H6L14.5 0.5V28.5L6 20H0Z" fill="#ffffff"/><path d="M17.5 8.5C21 10.5 21 18.5 17.5 20.5Z" fill="#ffffff"/><path d="M19 1.5C31 5.5 31 23.5 19 27.5" fill="none" stroke="#6c6f70" stroke-width="3"/></svg>
<svg style="left:894px;top:725px;" width="40" height="40" viewBox="0 0 40 40"><path d="M15.5 10L25.5 20L15.5 30L5.5 20Z" fill="#ffffff"/><path d="M24 10.5L33.5 20L24 29.5" fill="none" stroke="#ffffff" stroke-width="3.4"/></svg>
<svg style="left:945px;top:735px;" width="21" height="19" viewBox="0 0 21 19"><path d="M1.2 1.2H19.8V14.5H17V17.5H4V14.5H1.2Z" fill="none" stroke="#ffffff" stroke-width="2.4" stroke-linejoin="round"/><path d="M5 1.5V6M8 1.5V6M11 1.5V6M14 1.5V6M17 1.5V6" stroke="#ffffff" stroke-width="1.2"/></svg>
<svg style="left:988px;top:734px;" width="20" height="23" viewBox="0 0 20 23"><path d="M15.5 8.5L6.2 17.8C4.5 19.5 2 17 3.7 15.3L13.5 5.5C16.5 2.5 20.5 6.5 17.5 9.5L8 19C4 23 -1.5 17.5 2.5 13.5L12 4" fill="none" stroke="#ffffff" stroke-width="2.1" stroke-linecap="round" transform="translate(0.5 0)"/></svg>
<svg style="left:1026px;top:735px;" width="27" height="20" viewBox="0 0 27 20"><path d="M0 9.5H5.5L8 5.5L11 16.5L14.5 1.5L18.5 18.5L21 9.5H27" fill="none" stroke="#73c41d" stroke-width="2.2" stroke-linejoin="miter"/></svg>
<svg style="left:1072px;top:731px;" width="22" height="29" viewBox="0 0 22 29"><path d="M6.5 0.5H15.5V3H19.5C20.6 3 21.5 3.9 21.5 5V26.5C21.5 27.6 20.6 28.5 19.5 28.5H2.5C1.4 28.5 0.5 27.6 0.5 26.5V5C0.5 3.9 1.4 3 2.5 3H6.5Z" fill="#ffffff"/><path d="M13 8L5.5 17.5H10.5L9 24.5L16.5 14.5H11.5Z" fill="#1e2226"/></svg>
<svg style="left:1265px;top:728px;" width="35" height="35" viewBox="0 0 35 35"><circle cx="17.5" cy="17.5" r="17.3" fill="#ff9800"/><path d="M14.2 8.9A9.2 9.2 0 0 1 26.7 17.8" fill="none" stroke="#ffffff" stroke-width="3.5"/><path d="M22 17H31.6L26.6 24Z" fill="#ffffff"/><path d="M20.8 26.1A9.2 9.2 0 0 1 8.3 17.2" fill="none" stroke="#ffffff" stroke-width="3.5"/><path d="M13 18H3.4L8.4 11Z" fill="#ffffff"/></svg>
<svg style="left:1310px;top:728px;" width="35" height="35" viewBox="0 0 35 35"><circle cx="17.5" cy="17.5" r="17.3" fill="#f44336"/><path d="M10.6 10.2A10.6 10.6 0 1 0 24.4 10.2" fill="none" stroke="#ffffff" stroke-width="3.2" stroke-linecap="round"/><path d="M17.5 5.2V17" stroke="#ffffff" stroke-width="3.2" stroke-linecap="round"/></svg>
<span class="t" style="left:108.68px;top:737px;font-size:15.2px;color:#ececec;letter-spacing:0.485px;">Menu</span>
<span class="t" style="left:1114.81px;top:729px;font-size:12.7px;color:#f2f2f2;font-weight:bold;letter-spacing:-0.076px;">woensdag, 03 juli 2024</span>
<span class="t" style="left:1157.97px;top:751px;font-size:12.3px;color:#f2f2f2;font-weight:bold;letter-spacing:-0.271px;">09:32:21</span>
</body></html>
